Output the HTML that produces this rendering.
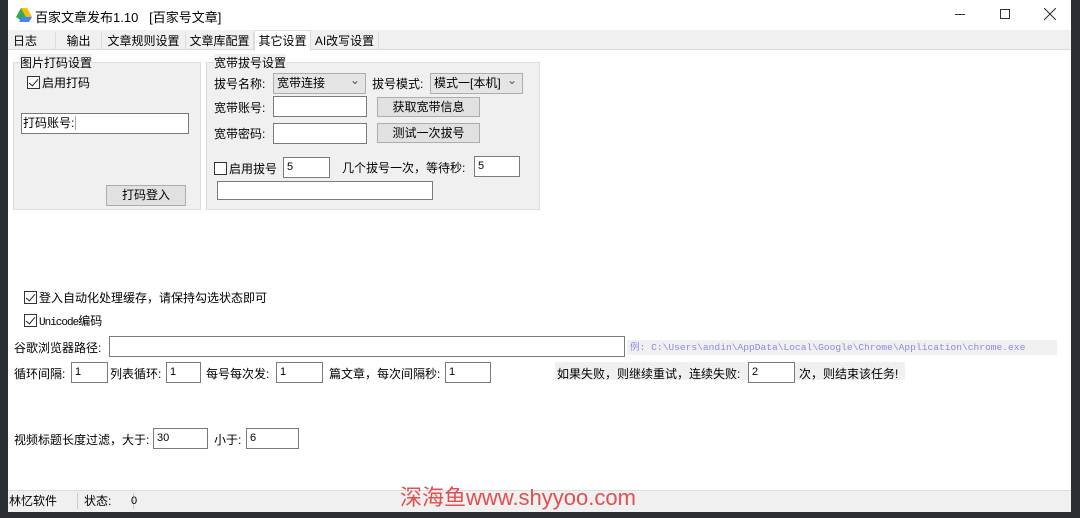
<!DOCTYPE html>
<html><head><meta charset="utf-8"><style>
*{box-sizing:border-box;margin:0;padding:0}
body{width:1080px;height:518px;overflow:hidden;background:#2a2e33;font-family:"Liberation Sans","Noto Sans CJK SC",sans-serif;font-size:12px;color:#000;position:relative}
.a{position:absolute;white-space:nowrap}
.win{position:absolute;left:8px;top:0;width:1063px;height:512px;background:#fff}
.inp{position:absolute;background:#fff;border:1px solid #7a7a7a;height:21px;padding-left:3px;line-height:19px;font-size:11px}
.btn{position:absolute;background:#e1e1e1;border:1px solid #adadad;text-align:center;line-height:19px}
.grp{position:absolute;background:#f0f0f0;border:1px solid #dcdcdc}
.cb{display:inline-block;width:13px;height:13px;border:1px solid #333;background:#fff;vertical-align:-2px;margin-right:2px;position:relative}
.cb.on::after{content:"";position:absolute;left:3px;top:0px;width:4px;height:8px;border:solid #222;border-width:0 1.5px 1.5px 0;transform:rotate(40deg)}
.tab{position:absolute;top:32px;height:18px;line-height:18px;font-size:12px;border-right:1px solid #ddd;padding:0;white-space:nowrap;overflow:hidden;text-align:center}
.sel{position:absolute;background:#e5e5e5;border:1px solid #adadad;height:21px;line-height:19px;padding-left:3px}
.sel::after{content:"⌄";position:absolute;right:5px;top:-3px;color:#555}
</style></head><body>
<div class="win">
<svg class="a" style="left:8px;top:8px" width="16" height="14" viewBox="0 0 16 14"><path d="M5 0h6l5 9h-6z" fill="#fbbc04"/><path d="M5 0l5 9-3 5L0 9z" fill="#34a853"/><path d="M3 14h10l3-5H6z" fill="#4285f4"/></svg>
<div class="a" style="left:27px;top:7px;font-size:13px">百家文章发布1.10&nbsp;&nbsp;&nbsp;[百家号文章]</div>
<div class="a" style="left:947px;top:14px;width:10px;height:1px;background:#333"></div>
<div class="a" style="left:992px;top:9px;width:10px;height:10px;border:1px solid #333"></div>
<svg class="a" style="left:1036px;top:8px" width="12" height="12"><path d="M0 0L12 12M12 0L0 12" stroke="#333" stroke-width="1.1"/></svg>
<div class="a" style="left:0;top:30px;width:1063px;height:20px;background:#f0f0f0;border-bottom:1px solid #dadada"></div>
<div class="tab" style="left:0;width:48px;text-align:left;padding-left:5px">日志</div>
<div class="tab" style="left:48px;width:46px">输出</div>
<div class="tab" style="left:94px;width:84px">文章规则设置</div>
<div class="tab" style="left:178px;width:68px">文章库配置</div>
<div class="tab" style="left:246px;top:30px;height:21px;line-height:20px;width:57px;background:#fff;border:1px solid #ddd;border-bottom:none">其它设置</div>
<div class="tab" style="left:303px;width:68px">AI改写设置</div>
<div class="grp" style="left:5px;top:62px;width:188px;height:148px"></div>
<div class="a" style="left:12px;top:54px;background:#f0f0f0">图片打码设置</div>
<div class="a" style="left:19px;top:74px"><span class="cb on"></span>启用打码</div>
<div class="inp" style="left:13px;top:113px;width:168px;padding:0"><span style="border-right:1px solid #aaa;padding:0 1px;font-size:12px">打码账号:</span></div>
<div class="btn" style="left:98px;top:185px;width:80px;height:21px">打码登入</div>
<div class="grp" style="left:198px;top:62px;width:334px;height:148px"></div>
<div class="a" style="left:206px;top:54px;background:#f0f0f0">宽带拔号设置</div>
<div class="a" style="left:206px;top:75px">拔号名称:</div>
<div class="sel" style="left:265px;top:73px;width:93px">宽带连接</div>
<div class="a" style="left:364px;top:75px">拔号模式:</div>
<div class="sel" style="left:422px;top:73px;width:93px">模式一[本机]</div>
<div class="a" style="left:206px;top:99px">宽带账号:</div>
<div class="inp" style="left:265px;top:96px;width:94px"></div>
<div class="btn" style="left:369px;top:97px;width:103px;height:20px">获取宽带信息</div>
<div class="a" style="left:206px;top:125px">宽带密码:</div>
<div class="inp" style="left:265px;top:123px;width:94px"></div>
<div class="btn" style="left:369px;top:123px;width:103px;height:20px">测试一次拔号</div>
<div class="a" style="left:206px;top:160px"><span class="cb"></span>启用拔号</div>
<div class="inp" style="left:275px;top:157px;width:47px">5</div>
<div class="a" style="left:334px;top:159px">几个拔号一次，等待秒:</div>
<div class="inp" style="left:466px;top:156px;width:46px">5</div>
<div class="inp" style="left:209px;top:181px;width:216px;height:19px"></div>
<div class="a" style="left:16px;top:289px"><span class="cb on"></span>登入自动化处理缓存，请保持勾选状态即可</div>
<div class="a" style="left:16px;top:312px"><span class="cb on"></span><span style="font-family:'Liberation Mono';font-size:11px;letter-spacing:-1px">Unicode</span>编码</div>
<div class="a" style="left:6px;top:339px">谷歌浏览器路径:</div>
<div class="inp" style="left:101px;top:336px;width:516px"></div>
<div class="a" style="left:619px;top:340px;width:430px;height:15px;background:#f0f0f0;color:#8a8ae0;font-family:'Liberation Mono',monospace;font-size:9.6px;line-height:15px;padding-left:3px">例: C:\Users\andin\AppData\Local\Google\Chrome\Application\chrome.exe</div>
<div class="a" style="left:6px;top:365px">循环间隔:</div>
<div class="inp" style="left:63px;top:362px;width:37px">1</div>
<div class="a" style="left:102px;top:365px">列表循环:</div>
<div class="inp" style="left:158px;top:362px;width:35px">1</div>
<div class="a" style="left:198px;top:365px">每号每次发:</div>
<div class="inp" style="left:268px;top:362px;width:47px">1</div>
<div class="a" style="left:321px;top:365px">篇文章，每次间隔秒:</div>
<div class="inp" style="left:437px;top:362px;width:46px">1</div>
<div class="a" style="left:547px;top:362px;width:350px;height:18px;background:#f0f0f0"></div>
<div class="a" style="left:549px;top:365px">如果失败，则继续重试，连续失败:</div>
<div class="inp" style="left:740px;top:362px;width:47px">2</div>
<div class="a" style="left:791px;top:365px">次，则结束该任务!</div>
<div class="a" style="left:6px;top:431px">视频标题长度过滤，大于:</div>
<div class="inp" style="left:145px;top:428px;width:55px">30</div>
<div class="a" style="left:206px;top:431px">小于:</div>
<div class="inp" style="left:238px;top:428px;width:53px">6</div>
<div class="a" style="left:0;top:490px;width:1063px;height:22px;background:#f0f0f0;border-top:1px solid #ddd"></div>
<div class="a" style="left:0;top:493px;width:70px;line-height:16px;border-right:1px solid #ccc;padding-left:1px">林忆软件</div>
<div class="a" style="left:76px;top:493px;width:50px;line-height:16px;border-right:1px solid #ccc">状态:</div>
<div class="a" style="left:123px;top:493px;line-height:16px;font-size:11px">0</div>
<div class="a" style="left:392px;top:484px;color:#e05050;font-size:22px;line-height:28px">深海鱼www.shyyoo.com</div>
</div>
</body></html>
